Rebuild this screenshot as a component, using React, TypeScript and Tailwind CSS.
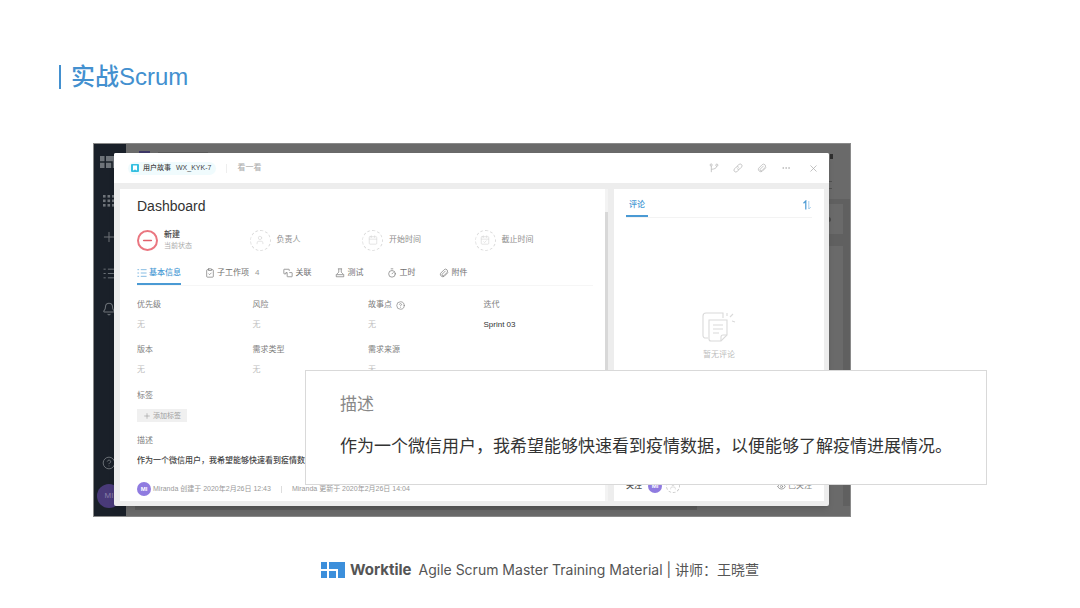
import React, { useState } from 'react';
import {
  Bell,
  Calendar,
  CalendarCheck,
  CircleHelp,
  ClipboardCheck,
  Ellipsis,
  Eye,
  Minus,
  Plus,
  Timer,
  User,
  X,
} from 'lucide-react';
import clsx from 'clsx';

type IconProps = { className?: string; strokeWidth?: number };

const WorktileLogo: React.FC<IconProps> = ({ className }) => (
  <svg viewBox="0 0 24 16" fill="currentColor" className={className} aria-hidden="true">
    <path d="M0 0h6v7H0zM0 9h6v7H0zM8 9h7v7H8zM8 0h16v16h-7V7H8z" />
  </svg>
);

const GridDots = () => (
  <svg viewBox="0 0 12 12" fill="currentColor" className="size-3">
    {[0, 4.5, 9].map((y) =>
      [0, 4.5, 9].map((x) => <rect key={`${x}-${y}`} x={x} y={y} width="2.6" height="2.6" />)
    )}
  </svg>
);

const ListIcon: React.FC<IconProps> = ({ className, strokeWidth }) => (
  <svg viewBox="0 0 24 24" fill="none" stroke="currentColor" strokeWidth={strokeWidth} className={className}>
    <path d="M1 4h4M1 12h4M1 20h4M9 4h14M9 12h14M9 20h14" />
  </svg>
);

const RelationIcon: React.FC<IconProps> = ({ className, strokeWidth }) => (
  <svg viewBox="0 0 24 24" fill="none" stroke="currentColor" strokeWidth={strokeWidth} className={className}>
    <path d="M7 14H3a1 1 0 0 1-1-1V4a1 1 0 0 1 1-1h11a1 1 0 0 1 1 1v3" />
    <path d="M15 11h6a1 1 0 0 1 1 1v8a1 1 0 0 1-1 1H11a1 1 0 0 1-1-1v-9" />
    <path d="M7 14v-3h3" />
  </svg>
);

const FlaskIcon: React.FC<IconProps> = ({ className, strokeWidth }) => (
  <svg viewBox="0 0 24 24" fill="none" stroke="currentColor" strokeWidth={strokeWidth} strokeLinejoin="round" className={className}>
    <path d="M7 2h10M9 2v8L3 16v5h18v-5l-6-6V2" />
    <path d="M4 16h16" />
  </svg>
);

const ClipIcon: React.FC<IconProps> = ({ className, strokeWidth }) => (
  <svg viewBox="0 0 24 24" fill="none" stroke="currentColor" strokeWidth={strokeWidth} strokeLinecap="round" className={className}>
    <path d="M21 11.500 13 19.500a5.800 5.800 0 0 1-9-7L12.500 4a4.800 4.800 0 0 1 7 6.500L12 18a2.600 2.600 0 0 1-4-3.500l7-7" />
  </svg>
);

const BranchIcon = () => (
  <svg viewBox="0 0 12 12" fill="none" stroke="currentColor" strokeWidth="0.8" className="size-[10px]">
    <circle cx="2.600" cy="2.400" r="1.300" />
    <circle cx="9.400" cy="2.600" r="1.300" />
    <path d="M2.800 3.700V11M9.200 3.900C8.800 6.600 6.400 7.200 3 7.600" />
  </svg>
);

const SlantLinkIcon = () => (
  <svg viewBox="0 0 12 12" fill="none" stroke="currentColor" strokeWidth="0.8" strokeLinecap="round" className="size-[10px]">
    <path d="M5 3.800 7 1.900a2.200 2.200 0 0 1 3.200 3.100L8.300 7a2.200 2.200 0 0 1-3 .1" />
    <path d="M7 8.200 5 10.100A2.200 2.200 0 0 1 1.800 7l1.900-2a2.200 2.200 0 0 1 3-.1" />
  </svg>
);

const EmptyNotes = () => (
  <svg viewBox="0 0 34 31" fill="none" stroke="currentColor" strokeWidth="1.1" className="h-[31px] w-[34px]">
    <path d="M6 26H3.500A2.500 2.500 0 0 1 1 23.500V4a3 3 0 0 1 3-3h17v5" />
    <path d="M7 8h18v15l-6 6H9a2 2 0 0 1-2-2z" />
    <path d="M25 23h-4a2 2 0 0 0-2 2v4" />
    <path d="M11 13h10M11 17h10M11 21h6" />
    <path d="M25 1v3M31 2l-3 3M30 9l3 1" />
  </svg>
);

const tabs = [
  { value: 'basic', label: '基本信息', icon: ListIcon },
  { value: 'children', label: '子工作项', icon: ClipboardCheck, count: 4 },
  { value: 'relation', label: '关联', icon: RelationIcon },
  { value: 'test', label: '测试', icon: FlaskIcon },
  { value: 'hours', label: '工时', icon: Timer },
  { value: 'files', label: '附件', icon: ClipIcon },
];

const assignments = [
  { label: '负责人', icon: User },
  { label: '开始时间', icon: Calendar },
  { label: '截止时间', icon: CalendarCheck },
];

const fields = [
  { label: '优先级' },
  { label: '风险' },
  { label: '故事点', help: true },
  { label: '迭代', value: 'Sprint 03' },
  { label: '版本' },
  { label: '需求类型' },
  { label: '需求来源' },
];

const Avatar = () => (
  <span className="flex size-[14px] items-center justify-center rounded-full bg-[#8f7be0] text-[6px] leading-none font-bold text-white">
    MI
  </span>
);

const Sidebar = () => (
  <nav className="flex w-8 flex-col items-center bg-[#1a2029] pt-3 pr-[2px] pb-2 text-[#6e7379]">
    <WorktileLogo className="h-3 w-[18px]" />
    <div className="mt-[15px] flex flex-col items-center">
      <button aria-label="应用" className="flex h-9 items-center">
        <GridDots />
      </button>
      <button aria-label="新建" className="flex h-9 items-center">
        <Plus className="size-4" strokeWidth={1.5} />
      </button>
      <button aria-label="任务" className="flex h-9 items-center">
        <ListIcon className="size-[13px]" strokeWidth={1.8} />
      </button>
      <button aria-label="通知" className="flex h-9 items-center">
        <Bell className="size-[14px]" strokeWidth={1.8} />
      </button>
    </div>
    <button aria-label="帮助" className="mt-auto">
      <CircleHelp className="size-[14px]" strokeWidth={1.6} />
    </button>
    <span className="mt-[14px] flex size-6 items-center justify-center rounded-full bg-[#493a79] text-[8px] text-[#8a80a8]">
      MI
    </span>
  </nav>
);

// Dimmed page that sits behind the dialog
const Backdrop = () => (
  <div className="col-start-1 row-start-1 flex bg-[#6a6a6a]">
    <Sidebar />
    <div className="flex grow flex-col justify-between">
      <div className="flex h-[9px] items-end gap-2 pl-[13px]">
        <span className="h-[2px] w-[11px] bg-[#3d3766]" />
        <span className="h-px w-[50px] bg-[#5a5a5a]" />
      </div>
      <div className="mb-[6px] ml-[9px] h-[5px] w-4/5 bg-[#5c5c5c]" />
    </div>
    <div className="flex w-[22px] flex-col pt-[10px]">
      <span className="ml-[2px] h-[5px] w-[3px] bg-[#2e2e2e]" />
      <span className="mt-[22px] h-[8px] w-[4px] border-y border-[#505050]" />
      <div className="mt-[10px] mb-[10px] flex grow flex-col gap-3 bg-[#606060] pt-[5px] pr-[7px]">
        <span className="flex h-[30px] items-center bg-[#6a6a6a]">
          <span className="h-[5px] w-[3px] rounded-r-full bg-[#4a4a4a]" />
        </span>
        <span className="grow bg-[#6a6a6a]" />
      </div>
    </div>
  </div>
);

const DialogHeader = () => (
  <header className="flex h-[30px] items-center justify-between rounded-t-xs bg-white pr-[10px] pl-[14px]">
    <div className="flex items-center">
      <span className="flex h-[13px] items-center rounded-full bg-[#f0fbfd] pr-[5px] pl-[3px] text-[7px] text-[#444444]">
        <span className="mr-1 flex size-2 items-center justify-center rounded-[1px] bg-[#35bfe0]">
          <svg viewBox="0 0 6 6" className="size-[6px]" fill="white">
            <path d="M1 0.500h4v5L3 4.400 1 5.500z" />
          </svg>
        </span>
        <span className="font-medium">用户故事</span>
        <span className="ml-[5px] font-medium">WX_KYK-7</span>
      </span>
      <span className="mx-[10px] h-[9px] w-px bg-[#eeeeee]" />
      <span className="text-[8px] text-[#aaaaaa]">看一看</span>
    </div>
    <div className="flex items-center gap-[14px] text-[#adadad]">
      <button aria-label="分支"><BranchIcon /></button>
      <button aria-label="复制链接"><SlantLinkIcon /></button>
      <button aria-label="附件"><ClipIcon className="size-[10px]" strokeWidth={1.6} /></button>
      <button aria-label="更多"><Ellipsis className="size-[10px]" strokeWidth={1.6} /></button>
      <button aria-label="关闭" className="ml-[3px]"><X className="size-[11px]" strokeWidth={1.6} /></button>
    </div>
  </header>
);

const StatusRow = () => (
  <div className="mt-[10px] grid h-6 grid-cols-4 items-center pr-[18px]">
    <div className="flex items-center gap-[6px]">
      <span className="flex size-[21px] items-center justify-center rounded-full border-2 border-[#ea7680] text-[#e0606b]">
        <Minus className="size-[13px]" strokeWidth={3} />
      </span>
      <div>
        <p className="text-[8px] leading-3 font-medium text-[#444444]">新建</p>
        <p className="text-[7px] leading-[10px] text-[#aaaaaa]">当前状态</p>
      </div>
    </div>
    {assignments.map(({ label, icon: Icon }) => (
      <div key={label} className="flex items-center gap-[6px]">
        <span className="flex size-[21px] items-center justify-center rounded-full border border-dashed border-[#dcdcdc] text-[#d8d8d8]">
          <Icon className="size-[10px]" strokeWidth={1.6} />
        </span>
        <span className="text-[8px] text-[#8e8e8e]">{label}</span>
      </div>
    ))}
  </div>
);

const Tabs = () => {
  const [active, setActive] = useState('basic');

  return (
    <div className="mt-[9px] mr-3 flex gap-6 border-b border-[#f6f6f6]">
      {tabs.map(({ value, label, icon: Icon, count }) => (
        <button
          key={value}
          onClick={() => setActive(value)}
          className={clsx(
            'flex h-6 items-center gap-[2px] border-b-2 pt-[2px] text-[8px]',
            active === value
              ? 'border-[#4a9ad4] font-medium text-[#4a9ad4]'
              : 'border-transparent text-[#707070]'
          )}
        >
          <Icon className="size-[10px]" strokeWidth={1.6} />
          {label}
          {count && <span className="ml-1 text-[#999999]">{count}</span>}
        </button>
      ))}
    </div>
  );
};

const DetailPanel = () => (
  <section className="flex grow bg-white">
    <div className="flex grow flex-col pt-[5px] pb-[5px] pl-[17px]">
      <h2 className="text-[14px] leading-6 text-[#333333]">Dashboard</h2>
      <StatusRow />
      <Tabs />

      <dl className="mt-[13px] mr-[6px] grid grid-cols-4 gap-y-[13px] text-[8px] leading-3">
        {fields.map((field) => (
          <div key={field.label} className="flex flex-col gap-2">
            <dt className="flex items-center gap-1 text-[#808080]">
              {field.label}
              {field.help && <CircleHelp className="size-[9px]" strokeWidth={1.8} />}
            </dt>
            <dd className={field.value ? 'text-[#333333]' : 'text-[#c0c0c0]'}>
              {field.value ?? '无'}
            </dd>
          </div>
        ))}
      </dl>

      <div className="mt-[14px] text-[8px] leading-3">
        <h3 className="text-[#808080]">标签</h3>
        <button className="mt-[7px] flex h-[13px] items-center gap-[2px] bg-[#f0f0f0] px-[6px] text-[7px] text-[#a0a0a0]">
          <Plus className="size-[8px]" strokeWidth={2} />
          添加标签
        </button>
        <h3 className="mt-[13px] text-[#808080]">描述</h3>
        <p className="mt-2 w-0 font-medium whitespace-nowrap text-[#444444]">
          作为一个微信用户，我希望能够快速看到疫情数据，以便能够了解疫情进展情况。
        </p>
      </div>

      <div className="mt-auto flex items-center text-[7px] leading-3 text-[#999999]">
        <Avatar />
        <span className="ml-[2px]">Miranda 创建于 2020年2月26日 12:43</span>
        <span className="mx-[10px] h-[7px] w-px bg-[#dddddd]" />
        <span>Miranda 更新于 2020年2月26日 14:04</span>
      </div>
    </div>
    <div className="w-[3px] bg-[#f3f3f3] pt-[23px]">
      <div className="h-[164px] bg-[#d8d8d8]" />
    </div>
  </section>
);

const CommentPanel = () => (
  <aside className="flex w-[210px] shrink-0 flex-col bg-white px-3 pt-1 pb-2 text-[8px]">
    <div className="flex items-center justify-between border-b border-[#f3f3f3]">
      <button className="h-6 border-b-2 border-[#4a9ad4] px-[3px] pt-[2px] font-medium text-[#4a9ad4]">
        评论
      </button>
      <button aria-label="排序" className="text-[#4a9ad4]">
        <svg viewBox="0 0 10 10" fill="none" stroke="currentColor" className="size-[10px]">
          <path d="M1.500 3.200 3.800 1V9.500" strokeWidth="1.200" />
          <path d="M6.800 1v8l2-2" strokeWidth="0.800" opacity="0.600" />
        </svg>
      </button>
    </div>
    <div className="flex grow flex-col items-center justify-center gap-[6px] pb-[25px] text-[#dadada]">
      <EmptyNotes />
      <p className="leading-3 text-[#bdbdbd]">暂无评论</p>
    </div>
    <div className="flex items-center text-[#555555]">
      <span className="font-medium">关注</span>
      <span className="ml-[6px]"><Avatar /></span>
      <button aria-label="添加关注人" className="ml-1 flex size-[14px] items-center justify-center rounded-full border border-dashed border-[#cccccc] text-[#cccccc]">
        <User className="size-2" />
      </button>
      <button className="ml-auto flex items-center gap-[2px] text-[#888888]">
        <Eye className="size-[9px]" />
        已关注
      </button>
    </div>
  </aside>
);

const StoryDialog = () => (
  <div
    role="dialog"
    aria-label="Dashboard"
    className="z-10 col-start-1 row-start-1 mt-[9px] mr-[21px] mb-[10px] ml-5 flex flex-col rounded-xs bg-[#ededed] shadow-md"
  >
    <DialogHeader />
    <div className="flex min-h-[323px] gap-[6px] pt-[6px] pr-[5px] pb-[5px] pl-[6px]">
      <DetailPanel />
      <CommentPanel />
    </div>
  </div>
);

export default function App() {
  return (
    <div className="flex min-h-screen flex-col bg-white font-['Liberation_Sans','Noto_Sans_CJK_SC',sans-serif]">
      <h1 className="flex items-center gap-[10px] pt-[61px] pl-[59px] text-[24px] leading-8 font-medium text-[#4390cf]">
        <span className="h-6 w-[2px] bg-[#4390cf]" />
        实战Scrum
      </h1>

      <main className="relative mx-[93px] mt-[50px]">
        <div className="mr-[136px] grid border border-[#8a8a8a]">
          <Backdrop />
          <StoryDialog />
        </div>

        {/* Enlarged description, laid over the dialog */}
        <div className="absolute top-[227px] right-0 left-[212px] z-20 border border-[#d9d9d9] bg-white pt-[22px] pb-[25px] pl-[34px] text-[17px] leading-6">
          <h3 className="text-[#888888]">描述</h3>
          <p className="mt-[18px] text-[#333333]">
            作为一个微信用户，我希望能够快速看到疫情数据，以便能够了解疫情进展情况。
          </p>
        </div>
      </main>

      <footer className="mt-[41px] flex items-center justify-center text-[14px] leading-6 text-[#555555]">
        <WorktileLogo className="h-4 w-6 text-[#3c8fdb]" />
        <span className="ml-[5px] font-['Inter'] text-[15px] font-bold">Worktile</span>
        <span className="ml-[7px] font-['Inter','Noto_Sans_CJK_SC',sans-serif]">
          Agile Scrum Master Training Material | 讲师：王晓萱
        </span>
      </footer>
    </div>
  );
}
